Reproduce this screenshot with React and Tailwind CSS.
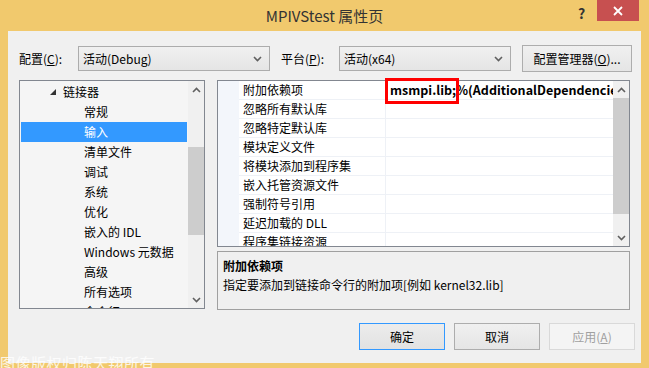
import React from "react";

const F = "font-['Segoe_UI','Noto_Sans_CJK_SC',sans-serif]";

function Chevron({ up }) {
  return (
    <svg width="9" height="6" viewBox="0 0 9 6" className="block">
      <path
        d={up ? "M1 5 L4.5 1.5 L8 5" : "M1 1 L4.5 4.5 L8 1"}
        fill="none"
        stroke="#606060"
        strokeWidth="1.6"
      />
    </svg>
  );
}

function Scrollbar({ thumbTop, thumbH }) {
  return (
    <div className="w-[16px] h-full bg-[#F0F0F0] flex flex-col">
      <div className="h-[17px] flex items-center justify-center"><Chevron up /></div>
      <div className="flex-1 relative">
        <div className="absolute left-0 right-0 bg-[#CDCDCD]" style={{ top: thumbTop, height: thumbH }} />
      </div>
      <div className="h-[17px] flex items-center justify-center"><Chevron /></div>
    </div>
  );
}

function Dropdown({ w, text }) {
  return (
    <div className={`${w} h-[25px] border border-[#ACACAC] bg-gradient-to-b from-[#F0F0F0] to-[#E5E5E5] flex items-center justify-between pl-[4px] pr-[7px] text-[12px] text-black`}>
      <span>{text}</span>
      <Chevron />
    </div>
  );
}

const tree = ["常规", "输入", "清单文件", "调试", "系统", "优化", "嵌入的 IDL", "Windows 元数据", "高级", "所有选项", "命令行"];
const rows = ["附加依赖项", "忽略所有默认库", "忽略特定默认库", "模块定义文件", "将模块添加到程序集", "嵌入托管资源文件", "强制符号引用", "延迟加载的 DLL", "程序集链接资源"];

export default function App() {
  return (
    <div className={`w-[649px] h-[368px] bg-[#F1C96D] relative overflow-hidden ${F}`}>
      {/* title bar */}
      <div className="h-[31px] relative flex items-center justify-center">
        <span className="text-[15px] text-[#333] leading-none -mt-[1px]">MPIVStest 属性页</span>
        <span className="absolute left-[578px] top-[3px] text-[14px] font-bold text-[#333]">?</span>
        <div className="absolute left-[597px] top-0 w-[42px] h-[21px] bg-[#C75050] flex items-center justify-center">
          <svg width="10" height="10" viewBox="0 0 10 10"><path d="M1 1 L9 9 M9 1 L1 9" stroke="white" strokeWidth="1.8" /></svg>
        </div>
      </div>

      {/* content */}
      <div className="mx-[8px] h-[332px] bg-[#F0F0F0] flex flex-col">
        {/* top row */}
        <div className="mt-[15px] h-[25px] flex items-center text-[12px] text-black">
          <span className="ml-[11px] w-[59px]">配置(<u>C</u>):</span>
          <Dropdown w="w-[192px]" text="活动(Debug)" />
          <span className="ml-[11px] w-[58px]">平台(<u>P</u>):</span>
          <Dropdown w="w-[172px]" text="活动(x64)" />
          <div className="ml-[11px] w-[110px] h-[27px] border border-[#ADADAD] bg-gradient-to-b from-[#F0F0F0] to-[#E5E5E5] flex items-center justify-center">
            配置管理器(<u>O</u>)...
          </div>
        </div>

        {/* middle */}
        <div className="mt-[9px] flex text-[12px] text-black">
          {/* tree */}
          <div className="ml-[11px] w-[186px] h-[229px] border border-[#828790] bg-[#F5F5F5] flex">
            <div className="flex-1 overflow-hidden pt-[1px]">
              <div className="h-[20px] flex items-center pl-[30px]">
                <svg width="7" height="7" viewBox="0 0 7 7" className="mr-[6px]"><path d="M6 0 L6 6 L0 6 Z" fill="#333" /></svg>
                <span>链接器</span>
              </div>
              {tree.map((t) => (
                <div key={t} className={`h-[20px] flex items-center pl-[63px] mx-[1px] ${t === "输入" ? "bg-[#3399FF] text-white" : ""}`}>
                  {t}
                </div>
              ))}
            </div>
            <Scrollbar thumbTop={49} thumbH={88} />
          </div>

          {/* right */}
          <div className="ml-[12px] w-[413px] flex flex-col">
            <div className="h-[167px] border border-[#828790] bg-white flex relative">
              <div className="w-[21px] bg-[#F3F6FB]" />
              <div className="flex-1 overflow-hidden">
                {rows.map((r, i) => (
                  <div key={r} className="h-[19px] flex border-b border-[#EEF1F6]">
                    <div className="w-[147px] pl-[4px] flex items-center border-r border-[#EEF1F6] whitespace-nowrap">{r}</div>
                    <div className="flex-1 pl-[4px] flex items-center whitespace-nowrap overflow-hidden font-bold text-[12.5px]">
                      {i === 0 ? "msmpi.lib;%(AdditionalDependencies)" : ""}
                    </div>
                  </div>
                ))}
              </div>
              <Scrollbar thumbTop={0} thumbH={116} />
              <div className="absolute left-[167px] -top-[3px] w-[74px] h-[26px] border-[3px] border-[#FF0000]" />
            </div>
            <div className="mt-[4px] h-[59px] border border-[#A0A0A0] bg-[#F0F0F0] pl-[5px] pt-[5px]">
              <div className="font-bold leading-[18px]">附加依赖项</div>
              <div className="leading-[20px]">指定要添加到链接命令行的附加项[例如 kernel32.lib]</div>
            </div>
          </div>
        </div>

        {/* buttons */}
        <div className="mt-[13px] flex text-[12px]">
          <div className="ml-[351px] w-[86px] h-[27px] border border-[#3399FF] bg-gradient-to-b from-[#ECECEC] to-[#E2E2E2] flex items-center justify-center text-black">确定</div>
          <div className="ml-[9px] w-[86px] h-[27px] border border-[#ADADAD] bg-gradient-to-b from-[#F0F0F0] to-[#E5E5E5] flex items-center justify-center text-black">取消</div>
          <div className="ml-[9px] w-[86px] h-[27px] border border-[#D9D9D9] bg-[#F4F4F4] flex items-center justify-center text-[#A0A0A0]">应用(<u>A</u>)</div>
        </div>
      </div>

      {/* watermark */}
      <div className="absolute left-0 top-[354px] text-[15px] leading-[18px] text-white/80 whitespace-nowrap tracking-[0.5px]">图像版权归陈天翔所有</div>
    </div>
  );
}
